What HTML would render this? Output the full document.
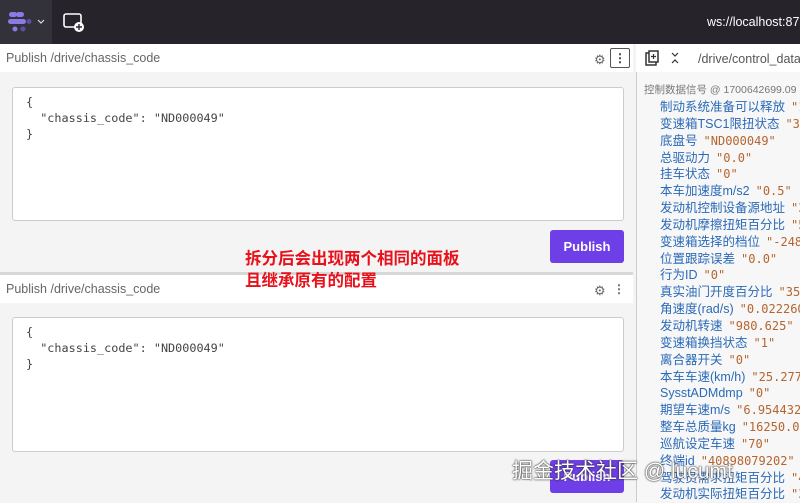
<!DOCTYPE html>
<html><head><meta charset="utf-8"><style>
*{margin:0;padding:0;box-sizing:border-box}
body{width:800px;height:502px;overflow:hidden;background:#f4f4f4;font-family:"Liberation Sans","Noto Sans CJK SC",sans-serif;position:relative}
.abs{position:absolute}
.top{left:0;top:0;width:800px;height:44px;background:#26242a}
.logo{left:0;top:0;width:52px;height:44px;background:#333139}
.hdr{left:0;width:633px;height:28px;background:#fff;font-size:12.5px;color:#666;padding:7px 0 0 6px}
.ta{left:12px;width:612px;background:#fff;border:1px solid #ccc;border-radius:3px;font-family:"DejaVu Sans Mono",monospace;font-size:11.8px;color:#444;line-height:16px;padding:6px 0 0 13px;white-space:pre}
.btn{left:550px;width:74px;height:33px;background:#6e3ee6;border-radius:3px;color:#fff;font-weight:bold;font-size:13px;text-align:center;line-height:33px}
.right{left:636px;top:44px;width:164px;height:458px;background:#f7f7f7;border-left:1px solid #ccc}
.rows{left:660px;top:99px;font-size:12.5px;white-space:nowrap;color:#2b6ab8}
.rows div{height:16.85px;line-height:16.8px;overflow:visible}
.rows span{color:#b5652f;font-family:"DejaVu Sans Mono",monospace;font-size:12px;margin-left:6px}
.note{left:245px;top:246px;color:#e8101a;font-weight:bold;font-size:16.5px;line-height:22px;font-family:"Noto Sans CJK SC",sans-serif}
</style></head><body>
<div class="abs top"></div>
<div class="abs logo">
<svg width="52" height="44"><g fill="#8a7ae8"><rect x="9" y="12" width="8" height="5" rx="2.5"/><rect x="16" y="12" width="8" height="5" rx="2.5"/><rect x="8" y="19" width="18" height="5" rx="2.5"/><circle cx="29" cy="21.5" r="2.5" fill="#5b4fa0"/><circle cx="15" cy="29" r="2.5"/><circle cx="23" cy="29" r="2.5" fill="#5b4fa0"/></g><path d="M38 20l3 3 3-3" stroke="#ddd" fill="none" stroke-width="1.2"/></svg>
</div>
<svg class="abs" style="left:62px;top:12px" width="24" height="22"><rect x="2" y="2" width="17" height="13" rx="2" fill="none" stroke="#fff" stroke-width="1.6"/><circle cx="17" cy="15" r="5" fill="#fff"/><path d="M17 12v6M14 15h6" stroke="#26242a" stroke-width="1.4"/></svg>
<div class="abs" style="left:707px;top:15px;color:#fff;font-size:12.5px">ws://localhost:8765</div>

<div class="abs hdr" style="top:44px">Publish /drive/chassis_code</div>
<div class="abs" style="left:594px;top:52px;font-size:13px;color:#666">⚙</div>
<div class="abs" style="left:610px;top:48px;width:20px;height:20px;border:1px solid #555;border-radius:2px;font-size:12px;text-align:center;line-height:18px;color:#333;font-weight:bold">⋮</div>
<div class="abs ta" style="top:87px;height:134px">{
  "chassis_code": "ND000049"
}</div>
<div class="abs btn" style="top:230px">Publish</div>

<div class="abs" style="left:0;top:272px;width:633px;height:3px;background:#d8d8d8"></div>
<div class="abs hdr" style="top:275px">Publish /drive/chassis_code</div>
<div class="abs" style="left:594px;top:283px;font-size:13px;color:#666">⚙</div>
<div class="abs" style="left:613px;top:282px;font-size:12px;color:#666;font-weight:bold">⋮</div>
<div class="abs ta" style="top:317px;height:135px">{
  "chassis_code": "ND000049"
}</div>
<div class="abs btn" style="top:460px">Publish</div>

<div class="abs note">拆分后会出现两个相同的面板<br>且继承原有的配置</div>

<div class="abs right"></div>
<div class="abs" style="left:636px;top:44px;width:164px;height:28px;background:#fff"></div>
<svg class="abs" style="left:644px;top:50px" width="16" height="16"><rect x="2" y="3" width="10" height="12" fill="none" stroke="#333" stroke-width="1.5"/><rect x="5" y="1" width="9" height="11" fill="#fff" stroke="#333" stroke-width="1.5"/><path d="M9.5 4v5M7 6.5h5" stroke="#333" stroke-width="1.2"/></svg>
<svg class="abs" style="left:670px;top:51px" width="10" height="14"><path d="M2 2l3 3 3-3M2 12l3-3 3 3" stroke="#333" fill="none" stroke-width="1.2"/></svg>
<div class="abs" style="left:698px;top:52px;font-size:12.5px;color:#555">/drive/control_data</div>
<div class="abs" style="left:644px;top:82px;font-size:10.5px;color:#777;white-space:nowrap">控制数据信号 @ 1700642699.09</div>
<div class="abs rows"><div>制动系统准备可以释放<span>"1"</span></div><div>变速箱TSC1限扭状态<span>"3"</span></div><div>底盘号<span>"ND000049"</span></div><div>总驱动力<span>"0.0"</span></div><div>挂车状态<span>"0"</span></div><div>本车加速度m/s2<span>"0.5"</span></div><div>发动机控制设备源地址<span>"3"</span></div><div>发动机摩擦扭矩百分比<span>"5"</span></div><div>变速箱选择的档位<span>"-248"</span></div><div>位置跟踪误差<span>"0.0"</span></div><div>行为ID<span>"0"</span></div><div>真实油门开度百分比<span>"35.</span></div><div>角速度(rad/s)<span>"0.022260</span></div><div>发动机转速<span>"980.625"</span></div><div>变速箱换挡状态<span>"1"</span></div><div>离合器开关<span>"0"</span></div><div>本车车速(km/h)<span>"25.277</span></div><div>SysstADMdmp<span>"0"</span></div><div>期望车速m/s<span>"6.954432</span></div><div>整车总质量kg<span>"16250.0"</span></div><div>巡航设定车速<span>"70"</span></div><div>终端id<span>"40898079202"</span></div><div>驾驶员需求扭矩百分比<span>"4</span></div><div>发动机实际扭矩百分比<span>"3</span></div></div>
<div class="abs" style="left:512px;top:455px;font-size:21px;color:#fff;white-space:nowrap;text-shadow:0 0 2px #333,0 0 1px #000">掘金技术社区 @ lucumt</div>
</body></html>
